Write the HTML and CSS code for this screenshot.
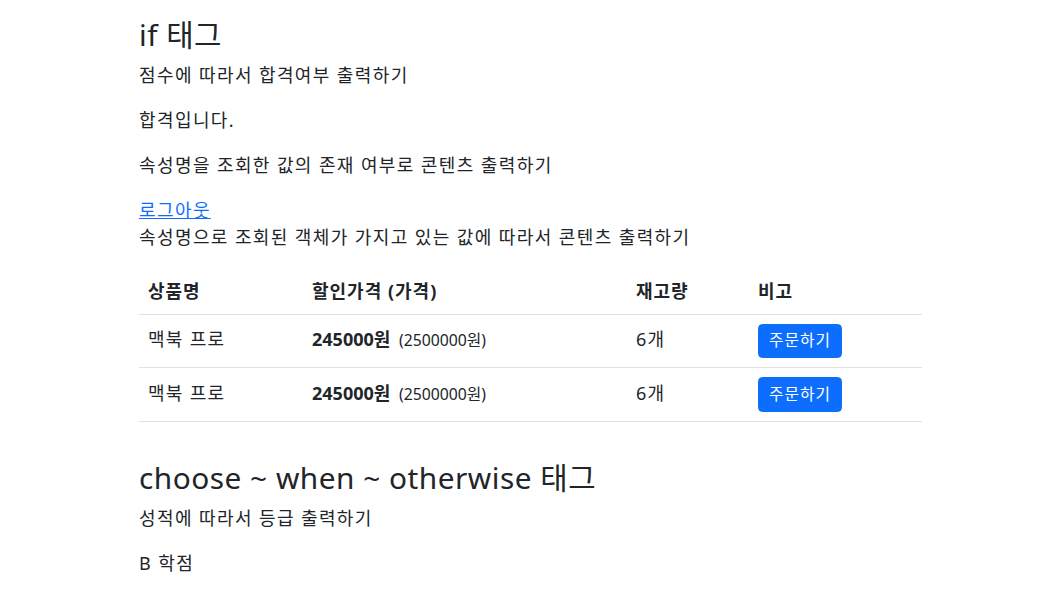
FILE: index.html
```html
<!DOCTYPE html>
<html lang="ko">
<head>
<meta charset="utf-8">
<title>JSTL</title>
<link rel="stylesheet" href="styles.css">
</head>
<body>
<div class="container">
  <h3 class="title">if 태그</h3>
  <p>점수에 따라서 합격여부 출력하기</p>
  <p>합격입니다.</p>
  <p>속성명을 조회한 값의 존재 여부로 콘텐츠 출력하기</p>
  <a href="#" class="link">로그아웃</a>
  <p>속성명으로 조회된 객체가 가지고 있는 값에 따라서 콘텐츠 출력하기</p>
  <table class="table">
    <thead>
      <tr>
        <th class="c1">상품명</th>
        <th class="c2">할인가격 (가격)</th>
        <th class="c3">재고량</th>
        <th class="c4">비고</th>
      </tr>
    </thead>
    <tbody>
      <tr>
        <td class="ko">맥북 프로</td>
        <td><strong>245000원</strong> <small>(2500000원)</small></td>
        <td class="ko">6개</td>
        <td><button class="btn">주문하기</button></td>
      </tr>
      <tr>
        <td class="ko">맥북 프로</td>
        <td><strong>245000원</strong> <small>(2500000원)</small></td>
        <td class="ko">6개</td>
        <td><button class="btn">주문하기</button></td>
      </tr>
    </tbody>
  </table>
  <h3 class="title second">choose ~ when ~ otherwise 태그</h3>
  <p>성적에 따라서 등급 출력하기</p>
  <p>B 학점</p>
</div>
</body>
</html>
```

FILE: styles.css
```css
* { box-sizing: border-box; }
html, body { margin: 0; padding: 0; }
body {
  font-family: "Noto Sans", "Noto Sans CJK KR", sans-serif;
  font-size: 18px;
  line-height: 1.5;
  color: #212529;
  background: #fff;
}
.container {
  width: 783px;
  margin: 0 0 0 calc(50% - 393px);
  padding-top: 17px;
}
.title {
  font-size: 29.8px;
  font-weight: 400;
  line-height: 1.2;
  margin: 0 0 9px;
  letter-spacing: 0.5px;
}
.title.second { margin-top: 38px; }
p { margin: 0 0 18px; letter-spacing: 1.4px; }
.link {
  color: #0d6efd;
  text-decoration: underline;
  letter-spacing: 1.4px;
}
.table {
  width: 100%;
  border-collapse: collapse;
  margin-bottom: 18px;
  vertical-align: top;
}
.table th, .table td {
  padding: 9px;
  text-align: left;
  border-bottom: 1px solid #dee2e6;
}
.table td { padding-top: 6px; }
.table td:last-child { padding-top: 9px; }
.table th { font-weight: 700; letter-spacing: 1px; }
.table td.ko { letter-spacing: 1.3px; }
.c1 { width: 164px; }
.c2 { width: 324px; }
.c3 { width: 122px; }
.c4 { width: 173px; }
strong { font-weight: 700; }
small { font-size: 15.75px; margin-left: 4px; }
.btn {
  font-family: inherit;
  font-size: 15.75px;
  line-height: 1.5;
  padding: 4.5px 9px;
  width: 84px;
  border: 1px solid #0d6efd;
  border-radius: 4.5px;
  background: #0d6efd;
  color: #fff;
  letter-spacing: 1px;
  cursor: pointer;
}
```
